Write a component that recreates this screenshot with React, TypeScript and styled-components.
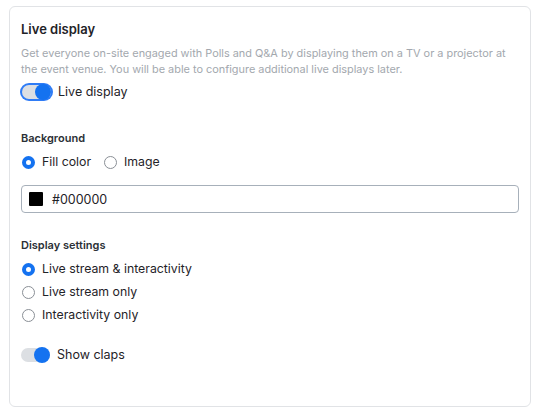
import React, { useState } from 'react'
import styled, { createGlobalStyle } from 'styled-components'

const GlobalStyle = createGlobalStyle`
  html, body {
    margin: 0;
    padding: 0;
    background: #ffffff;
    font-family: Inter, "Noto Sans", "Liberation Sans", sans-serif;
    color: #1f2328;
  }
`

const Page = styled.div`
  padding: 6px 10px 6px 9px;
`

const Card = styled.section`
  border: 1px solid #e1e3e6;
  border-radius: 6px;
  padding: 13px 11px 20px 11px;
  box-sizing: border-box;
  height: 401px;
`

const Title = styled.h2`
  margin: 0;
  font-size: 13px;
  font-weight: 600;
  line-height: 18px;
  color: #1f2328;
`

const Description = styled.p`
  margin: 7px 0 0 0;
  font-size: 10.9px;
  line-height: 16px;
  color: #a3a8ae;
`

const ToggleRow = styled.label<{ $top: number }>`
  display: flex;
  align-items: center;
  gap: 7px;
  margin-top: ${p => p.$top}px;
  font-size: 12.5px;
  color: #1f2328;
  cursor: pointer;
`

const Track = styled.span<{ $focused?: boolean }>`
  position: relative;
  display: inline-block;
  width: 29px;
  height: 14px;
  border-radius: 8px;
  background: #dcdfe3;
  box-shadow: ${p => (p.$focused ? '0 0 0 2px #2f7cf6' : 'none')};
  margin-left: ${p => (p.$focused ? '1px' : '0')};
`

const Thumb = styled.span<{ $on: boolean }>`
  position: absolute;
  top: -1px;
  left: ${p => (p.$on ? '13px' : '0')};
  width: 16px;
  height: 16px;
  border-radius: 50%;
  background: #1472f0;
`

const SectionLabel = styled.div<{ $top: number }>`
  margin-top: ${p => p.$top}px;
  font-size: 11px;
  font-weight: 600;
  line-height: 14px;
  color: #2b3036;
`

const RadioGroup = styled.div<{ $row?: boolean }>`
  display: flex;
  flex-direction: ${p => (p.$row ? 'row' : 'column')};
  gap: ${p => (p.$row ? '12px' : '7px')};
  margin-top: 9px;
`

const RadioLabel = styled.label`
  display: flex;
  align-items: center;
  gap: 7px;
  font-size: 12.3px;
  line-height: 16px;
  color: #1f2328;
  cursor: pointer;
`

const RadioDot = styled.span<{ $checked: boolean }>`
  width: 13px;
  height: 13px;
  box-sizing: border-box;
  border-radius: 50%;
  border: ${p => (p.$checked ? '4px solid #1472f0' : '1px solid #8a8f96')};
  background: #ffffff;
  flex-shrink: 0;
  margin-left: 1px;
`

const ColorField = styled.div`
  display: flex;
  align-items: center;
  gap: 9px;
  margin-top: 15px;
  height: 28px;
  box-sizing: border-box;
  border: 1px solid #a7b0ba;
  border-radius: 4px;
  padding: 0 7px;
  font-size: 12.5px;
  color: #1f2328;
`

const Swatch = styled.span<{ $color: string }>`
  width: 14px;
  height: 14px;
  background: ${p => p.$color};
  border-radius: 1px;
`

type ToggleProps = { label: string; on: boolean; focused?: boolean; top: number; onToggle: () => void }

const Toggle = ({ label, on, focused, top, onToggle }: ToggleProps) => (
  <ToggleRow $top={top} onClick={onToggle}>
    <Track $focused={focused}>
      <Thumb $on={on} />
    </Track>
    {label}
  </ToggleRow>
)

type RadioProps = { label: string; checked: boolean; onPick: () => void }

const Radio = ({ label, checked, onPick }: RadioProps) => (
  <RadioLabel onClick={onPick}>
    <RadioDot $checked={checked} />
    {label}
  </RadioLabel>
)

const displayOptions = ['Live stream & interactivity', 'Live stream only', 'Interactivity only']

export default function App() {
  const [live, setLive] = useState(true)
  const [claps, setClaps] = useState(true)
  const [bg, setBg] = useState<'fill' | 'image'>('fill')
  const [mode, setMode] = useState(0)

  return (
    <Page>
      <GlobalStyle />
      <Card>
        <Title>Live display</Title>
        <Description>
          Get everyone on-site engaged with Polls and Q&amp;A by displaying them on a TV or a projector at
          the event venue. You will be able to configure additional live displays later.
        </Description>
        <Toggle label="Live display" on={live} focused top={7} onToggle={() => setLive(!live)} />

        <SectionLabel $top={32}>Background</SectionLabel>
        <RadioGroup $row>
          <Radio label="Fill color" checked={bg === 'fill'} onPick={() => setBg('fill')} />
          <Radio label="Image" checked={bg === 'image'} onPick={() => setBg('image')} />
        </RadioGroup>
        <ColorField>
          <Swatch $color="#000000" />
          #000000
        </ColorField>

        <SectionLabel $top={25}>Display settings</SectionLabel>
        <RadioGroup>
          {displayOptions.map((o, i) => (
            <Radio key={o} label={o} checked={mode === i} onPick={() => setMode(i)} />
          ))}
        </RadioGroup>

        <Toggle label="Show claps" on={claps} top={24} onToggle={() => setClaps(!claps)} />
      </Card>
    </Page>
  )
}
